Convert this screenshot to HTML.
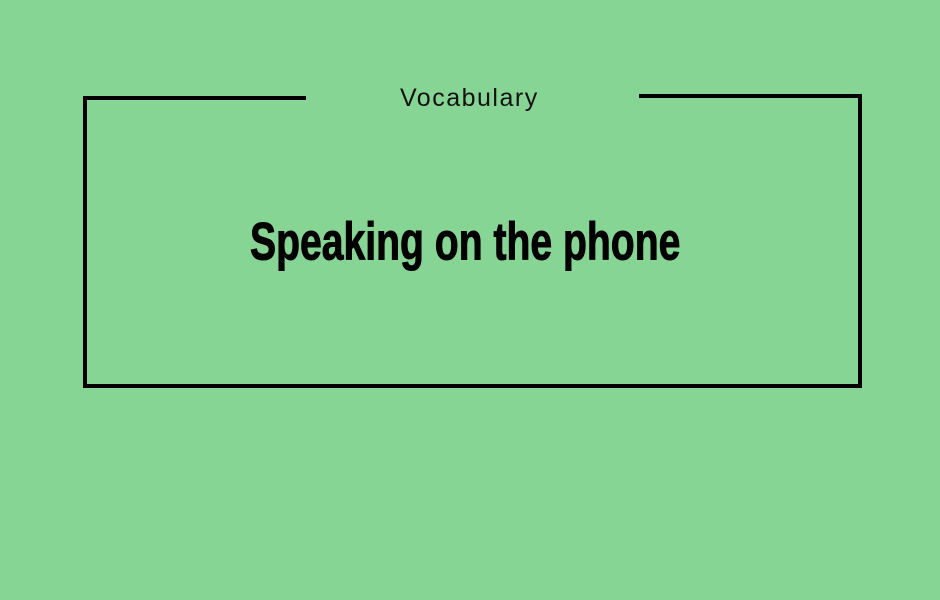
<!DOCTYPE html>
<html><head><style>
html,body{margin:0;padding:0}
body{width:940px;height:600px;background:#87d594;position:relative;overflow:hidden;font-family:"Liberation Sans",sans-serif}
.l{position:absolute;background:#000}
.voc{position:absolute;left:400px;top:84px;width:150px;font-size:25px;letter-spacing:1.5px;color:#111;white-space:nowrap}
.t{position:absolute;left:250px;top:212px;width:430px;height:70px;white-space:nowrap}
.t span{display:inline-block;font-family:"Liberation Sans Narrow","Liberation Sans",sans-serif;font-weight:bold;font-size:62px;line-height:70px;color:#000;transform-origin:0 0;transform:scale(0.631,0.86);-webkit-text-stroke:1.2px #000}
</style></head><body>
<div class="l" style="left:83px;top:96px;width:223px;height:4px"></div>
<div class="l" style="left:83px;top:96px;width:4px;height:292px"></div>
<div class="l" style="left:639px;top:94px;width:223px;height:4px"></div>
<div class="l" style="left:858px;top:94px;width:4px;height:293px"></div>
<div class="l" style="left:83px;top:384px;width:779px;height:4px"></div>
<div class="voc">Vocabulary</div>
<div class="t"><span>Speaking on the phone</span></div>
</body></html>
